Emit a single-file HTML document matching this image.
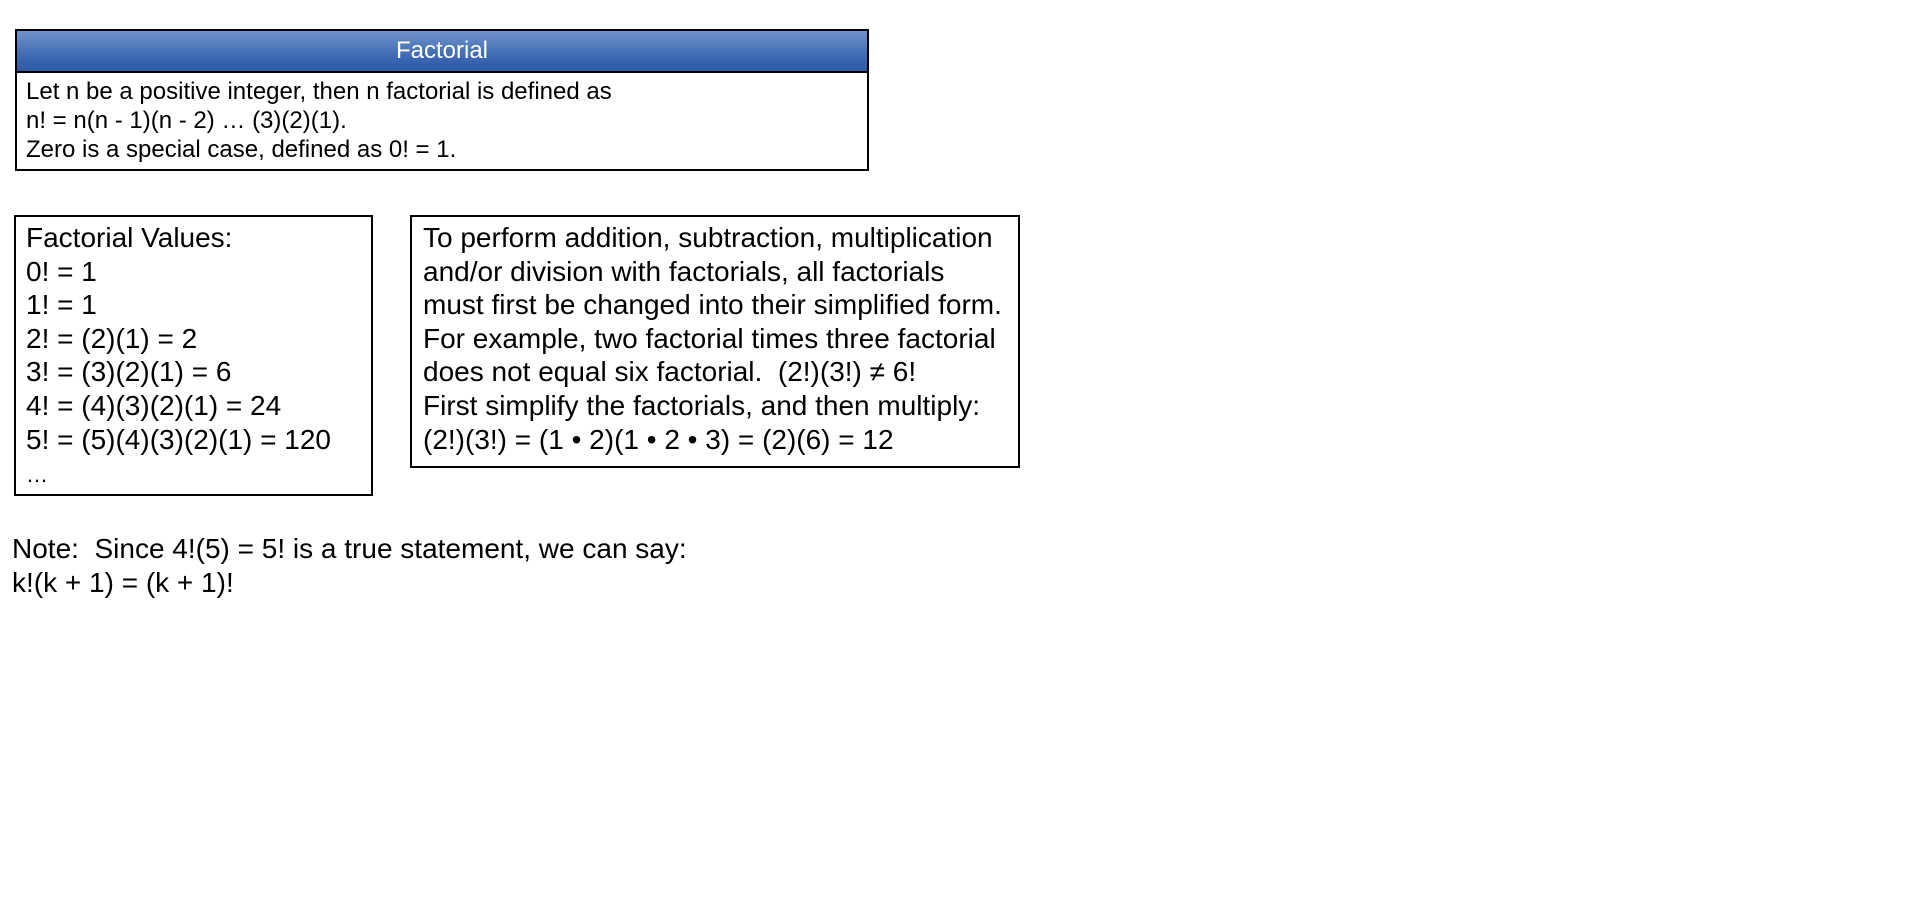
<!DOCTYPE html>
<html><head><meta charset="utf-8"><style>
body{margin:0;width:1914px;height:903px;background:#fff;font-family:"Liberation Sans",Arial,sans-serif;color:#000;position:relative;overflow:hidden}
.b{position:absolute;box-sizing:border-box;border:2px solid #000;background:#fff}
.hd{height:40px;background:linear-gradient(#6f93cc,#3a66b0 70%,#2d5aa6);color:#fff;text-align:center;font-size:24px;line-height:40px;border-bottom:2px solid #000}
.t1{padding:4px 0 0 9px;font-size:24px;line-height:29px;white-space:nowrap}
.t2{padding:4px 0 0 10px;font-size:28px;line-height:33.6px;white-space:nowrap}
.nt{position:absolute;left:12px;top:532px;font-size:28px;line-height:34px;white-space:nowrap}
</style></head><body>
<div class="b" style="left:15px;top:29px;width:854px;height:142px;border-width:2.5px">
<div class="hd">Factorial</div>
<div class="t1">Let n be a positive integer, then n factorial is defined as<br>n! = n(n - 1)(n - 2) … (3)(2)(1).<br>Zero is a special case, defined as 0! = 1.</div>
</div>
<div class="b" style="left:14px;top:215px;width:359px;height:281px">
<div class="t2">Factorial Values:<br>0! = 1<br>1! = 1<br>2! = (2)(1) = 2<br>3! = (3)(2)(1) = 6<br>4! = (4)(3)(2)(1) = 24<br>5! = (5)(4)(3)(2)(1) = 120<br><span style="font-size:22px">…</span></div>
</div>
<div class="b" style="left:410px;top:215px;width:610px;height:253px">
<div class="t2" style="padding-left:11px">To perform addition, subtraction, multiplication<br>and/or division with factorials, all factorials<br>must first be changed into their simplified form.<br>For example, two factorial times three factorial<br>does not equal six factorial.&nbsp; (2!)(3!) ≠ 6!<br>First simplify the factorials, and then multiply:<br>(2!)(3!) = (1 • 2)(1 • 2 • 3) = (2)(6) = 12</div>
</div>
<div class="nt">Note:&nbsp; Since 4!(5) = 5! is a true statement, we can say:<br>k!(k + 1) = (k + 1)!</div>
</body></html>
